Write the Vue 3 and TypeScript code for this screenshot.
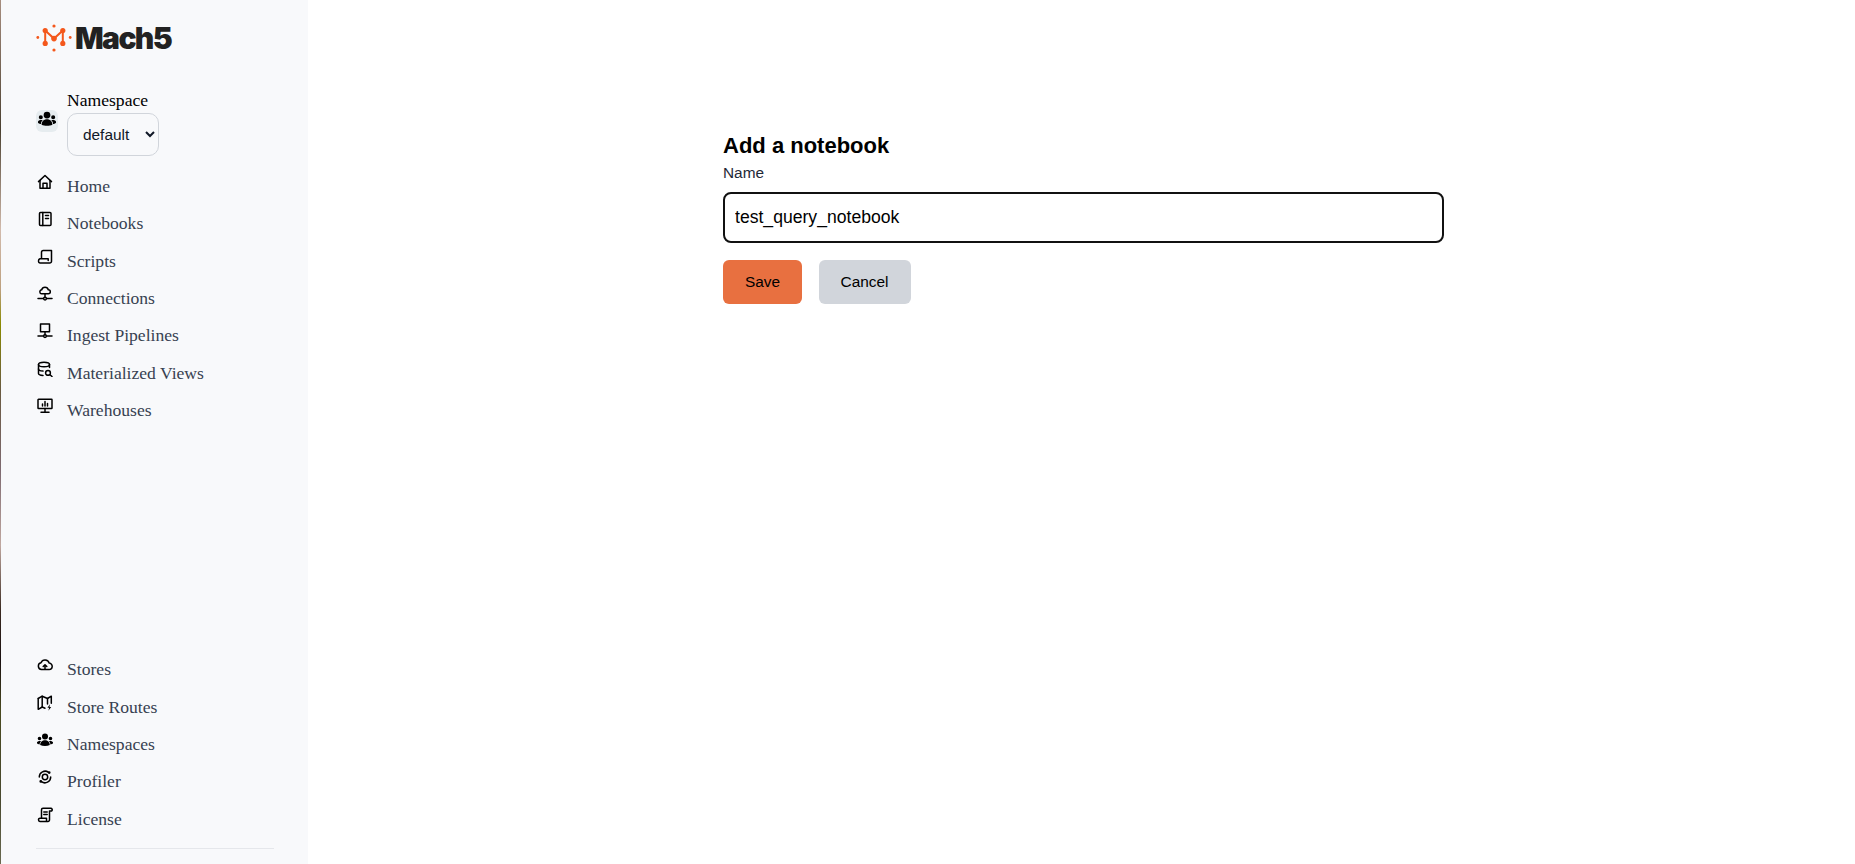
<template>
  <div class="page">
    <aside class="sidebar">
      <div class="logo">
        <svg class="logo-mark" viewBox="0 0 36 28" width="36" height="28">
          <g fill="#f4581c">
            <circle cx="18" cy="2" r="1.6" />
            <circle cx="18" cy="26" r="1.6" />
            <circle cx="1.8" cy="13.5" r="1.4" />
            <circle cx="34.2" cy="13.5" r="1.4" />
            <circle cx="9.2" cy="6.6" r="2.6" />
            <circle cx="26.8" cy="6.6" r="2.6" />
            <circle cx="9.2" cy="19.4" r="2.6" />
            <circle cx="26.8" cy="19.4" r="2.6" />
            <circle cx="18" cy="14.6" r="2.8" />
          </g>
          <path d="M9.2 19.4V6.6L18 14.6l8.8-8V19.4" fill="none" stroke="#f4581c" stroke-width="2" />
        </svg>
        <span class="logo-text">Mach5</span>
      </div>

      <div class="namespace">
        <span class="ns-badge">
          <svg viewBox="0 0 16 16" width="18" height="18" fill="currentColor">
            <path v-for="d in groupIcon" :key="d" :d="d" />
          </svg>
        </span>
        <div class="ns-field">
          <label class="ns-label" for="ns">Namespace</label>
          <select id="ns" class="ns-select" v-model="namespace">
            <option value="default">default</option>
          </select>
        </div>
      </div>

      <nav class="nav nav-top">
        <a v-for="item in topItems" :key="item.label" class="nav-item">
          <svg class="nav-icon" viewBox="0 0 16 16" width="16" height="16">
            <path v-for="d in item.lines" :key="d" :d="d" class="line" />
            <path v-for="d in item.solid ?? []" :key="d" :d="d" class="solid" />
          </svg>
          <span>{{ item.label }}</span>
        </a>
      </nav>

      <div class="spacer"></div>

      <nav class="nav">
        <a v-for="item in bottomItems" :key="item.label" class="nav-item">
          <svg class="nav-icon" viewBox="0 0 16 16" width="16" height="16">
            <path v-for="d in item.lines" :key="d" :d="d" class="line" />
            <path v-for="d in item.solid ?? []" :key="d" :d="d" class="solid" />
          </svg>
          <span>{{ item.label }}</span>
        </a>
      </nav>
      <div class="divider"></div>
    </aside>

    <main class="main">
      <form class="form" @submit.prevent>
        <h2 class="title">Add a notebook</h2>
        <label class="field-label" for="name">Name</label>
        <input id="name" v-model="name" class="input" type="text" />
        <div class="actions">
          <button type="submit" class="btn save">Save</button>
          <button type="button" class="btn cancel">Cancel</button>
        </div>
      </form>
    </main>
  </div>
</template>

<script setup lang="ts">
import { ref } from "vue";

interface NavItem {
  label: string;
  lines: string[];
  solid?: string[];
}

const namespace = ref("default");
const name = ref("test_query_notebook");

const groupIcon = [
  "M8 1.5a3 3 0 1 1 0 6 3 3 0 0 1 0-6z",
  "M2.5 4.7a1.8 1.8 0 1 1 0 3.6 1.8 1.8 0 0 1 0-3.6zM13.5 4.7a1.8 1.8 0 1 1 0 3.6 1.8 1.8 0 0 1 0-3.6z",
  "M3.2 13c0-2.9 2.1-4.8 4.8-4.8s4.8 1.900 4.8 4.8c-1.3.6-3 .9-4.800.9s-3.500-.3-4.800-.9z",
  "M0 10.200c.6-1 1.900-1.400 4.200-1.300-1 1-1.500 2.200-1.600 3.500C1.400 12.400.5 11.900 0 11.300zM16 10.200c-.6-1-1.900-1.400-4.200-1.300 1 1 1.500 2.200 1.600 3.500 1.200 0 2.100-.5 2.600-1.100z",
];

const topItems: NavItem[] = [
  {
    label: "Home",
    lines: ["M1.5 7.6 8 1.5l6.5 6.1", "M3 6.4V14.3h10V6.4", "M6 14.3V9.3h4v5"],
  },
  {
    label: "Notebooks",
    lines: ["M3.5 1.5H13a1 1 0 0 1 1 1v11a1 1 0 0 1-1 1H3.500a1 1 0 0 1-1-1v-11a1 1 0 0 1 1-1z", "M5.800 1.500v13", "M8.500 4.500h3M8.500 7.500h3"],
  },
  {
    label: "Scripts",
    lines: ["M4.500 9.800V3.300a1.800 1.800 0 0 1 1.800-1.800h8.200v10.700a1.800 1.800 0 0 1-1.800 1.800H3a1.800 1.800 0 0 1-1.500-1.800 2.400 2.400 0 0 1 1.500-2.400h8.200v1.800"],
  },
  {
    label: "Connections",
    lines: ["M5 7.800a2 2 0 0 1-.3-4 3.400 3.400 0 0 1 6.600 0 2 2 0 0 1 0 4z", "M8 7.800v3.400", "M1 12.600h5M10 12.600h5", "M8 11.200a1.400 1.400 0 1 1 0 2.800 1.400 1.400 0 0 1 0-2.800z"],
  },
  {
    label: "Ingest Pipelines",
    lines: ["M3.500 1h9v7.800h-9z", "M8 8.800v3", "M1 13h5M10 13h5", "M8 11.700a1.400 1.400 0 1 1 0 2.800 1.400 1.400 0 0 1 0-2.800z"],
  },
  {
    label: "Materialized Views",
    lines: ["M1.500 3.500C1.500 2.200 3.900 1.200 7 1.200s5.500 1 5.500 2.300-2.400 2.300-5.500 2.300-5.500-1-5.500-2.300z", "M1.500 3.500v9c0 1 1.700 1.800 4.500 2", "M12.500 3.500v3", "M1.500 8c0 1.100 2 2 4.500 2.100", "M11 9.500a2.400 2.400 0 1 1 0 4.800 2.400 2.400 0 0 1 0-4.800z", "M13 13.800l2 1.700"],
  },
  {
    label: "Warehouses",
    lines: ["M1.500 1.300h13a.5.500 0 0 1 .5.500v8.200a.5.500 0 0 1-.5.500h-13a.5.500 0 0 1-.5-.5V1.800a.5.500 0 0 1 .5-.5z", "M8 10.500v3.300", "M4 14.300h8", "M5.500 8V6M8 8V3.500M10.500 8V5.500"],
  },
];

const bottomItems: NavItem[] = [
  {
    label: "Stores",
    lines: ["M4.500 12.500a3.400 3.400 0 0 1-.5-6.700 4.300 4.300 0 0 1 8.200.3 3.200 3.200 0 0 1-.4 6.400z", "M8 12V8M6.200 9.500 8 7.700l1.800 1.800"],
  },
  {
    label: "Store Routes",
    lines: ["M1.200 3.500 5.200 1.200l5.300 2.300 3.800-2.300v7", "M1.200 3.500v10.800l4-2.300 2.800 1.200", "M5.200 1.200V12M10.500 3.500V9"],
    solid: ["M13 9.300l-2.600 3.500h1.700l-.7 2.900 2.800-3.700h-1.700z"],
  },
  {
    label: "Namespaces",
    lines: [],
    solid: groupIcon,
  },
  {
    label: "Profiler",
    lines: ["M8 5.300a2.700 2.700 0 1 1 0 5.400 2.700 2.700 0 0 1 0-5.400z", "M2.300 8A5.800 5.800 0 0 1 11.500 3.300", "M13.700 8A5.800 5.800 0 0 1 4.500 12.700"],
    solid: ["M12.200 2.200a1.400 1.400 0 1 1 0 2.800 1.400 1.400 0 0 1 0-2.800zM3.800 11a1.400 1.400 0 1 1 0 2.800 1.400 1.400 0 0 1 0-2.800z"],
  },
  {
    label: "License",
    lines: ["M4.500 11.300V2.800a1.500 1.500 0 0 1 1.500-1.500h7.500a1.500 1.500 0 0 1 1.200 2.600H12.500v9a1.500 1.500 0 0 1-1.500 1.500H3a1.700 1.700 0 0 1-1.500-1.700 1.400 1.400 0 0 1 1.500-1.400h6.500v3", "M6.800 5h3.400M6.800 7.500h3.400"],
  },
];
</script>

<style>
html,
body {
  margin: 0;
  overflow: hidden;
  background: #fff;
}
</style>

<style scoped>
.page {
  display: flex;
  height: 100vh;
  background: #fff;
  font-family: "Liberation Sans", Arial, sans-serif;
}

.sidebar {
  width: 308px;
  flex-shrink: 0;
  box-sizing: border-box;
  display: flex;
  flex-direction: column;
  padding: 22px 35px 15px 35px;
  background: #f8f9fb;
  border-style: solid;
  border-width: 0 0 0 1px;
  border-image: linear-gradient(
      to bottom,
      #a88f80 0,
      #4a4030 130px,
      #d2bbac 230px,
      #bda07e 290px,
      #8a8a00 325px,
      #6a5a40 390px,
      #7e6a70 470px,
      #c0a8a0 545px,
      #3a2a20 610px,
      #1a1010 660px,
      #4a4a20 710px,
      #4a4a30 800px,
      #6a6a50 864px
    )
    1;
}

.logo {
  display: flex;
  align-items: center;
  gap: 3px;
  height: 32px;
}

.logo-text {
  font-family: Inter, "Liberation Sans", sans-serif;
  font-size: 30px;
  font-weight: 900;
  letter-spacing: -1.6px;
  line-height: 32px;
  color: #222;
}

.namespace {
  display: flex;
  align-items: center;
  gap: 9px;
  margin-top: 34px;
}

.ns-badge {
  width: 22px;
  height: 22px;
  margin-top: -3px;
  display: flex;
  align-items: flex-start;
  justify-content: center;
  border-radius: 6px;
  background: #e6ecef;
  color: #000;
}

.ns-field {
  display: flex;
  flex-direction: column;
}

.ns-label {
  font-family: "Liberation Serif", serif;
  font-size: 17.6px;
  line-height: 25px;
  color: #000;
}

.ns-select {
  width: 92px;
  height: 43px;
  padding: 0 9px 0 11px;
  border: 1px solid #d1d5db;
  border-radius: 10px;
  background: transparent;
  color: #111827;
  font-family: "Liberation Sans", sans-serif;
  font-size: 15.4px;
}

.nav {
  display: flex;
  flex-direction: column;
  gap: 13.33px;
}

.nav-top {
  margin-top: 18px;
}

.nav-item {
  display: flex;
  align-items: flex-start;
  gap: 14px;
  height: 24px;
  font-family: "Liberation Serif", serif;
  font-size: 17.6px;
  line-height: 24px;
  color: #374151;
}

.nav-icon {
  flex-shrink: 0;
  margin-left: 1px;
}

.line {
  fill: none;
  stroke: #000;
  stroke-width: 1.5;
  stroke-linecap: round;
  stroke-linejoin: round;
}

.solid {
  fill: #000;
}

.spacer {
  flex: 1;
}

.divider {
  height: 1px;
  margin: 17.5px -1px 0 0;
  background: #e5e7eb;
}

.main {
  flex: 1;
  min-width: 0;
  padding: 131px 0 0 415px;
}

.form {
  width: 721px;
  display: flex;
  flex-direction: column;
}

.title {
  margin: 0;
  font-size: 22px;
  font-weight: 700;
  line-height: 30px;
  color: #000;
}

.field-label {
  margin-top: 2px;
  font-size: 15.4px;
  line-height: 20px;
  color: #1f2937;
}

.input {
  box-sizing: border-box;
  width: 100%;
  height: 51px;
  margin-top: 9px;
  padding: 0 10px;
  border: 2px solid #111;
  border-radius: 8px;
  outline: none;
  font-family: inherit;
  font-size: 17.6px;
  color: #000;
}

.actions {
  display: flex;
  gap: 16.5px;
  margin-top: 17px;
}

.btn {
  height: 44px;
  padding: 0 22px;
  border: none;
  border-radius: 6px;
  font-family: inherit;
  font-size: 15.4px;
  color: #000;
}

.save {
  background: #e87040;
}

.cancel {
  background: #d1d5db;
}
</style>
